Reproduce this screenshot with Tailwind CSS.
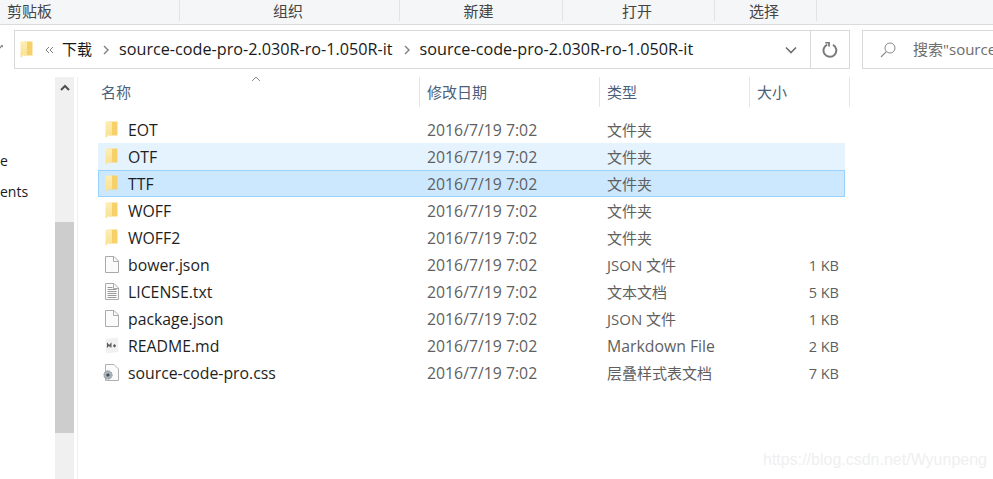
<!DOCTYPE html>
<html lang="en">
<head>
<meta charset="utf-8">
<title>source-code-pro-2.030R-ro-1.050R-it</title>
<script src="https://cdn.jsdelivr.net/npm/@tailwindcss/browser@4"></script>
</head>
<body class="relative w-[993px] h-[479px] overflow-hidden bg-white text-[15px] text-[#1a1a1a] font-['Open_Sans','Noto_Sans_CJK_SC',sans-serif]">

  <!-- ribbon group labels -->
  <div class="flex h-[25px] bg-[#f5f6f7] border-b border-[#dadbdc] text-[15px] text-[#444] leading-[23px]">
    <div class="w-[180px] h-[21px] pl-[7px] border-r border-[#e2e3e4]">剪贴板</div>
    <div class="w-[220px] h-[21px] text-center border-r border-[#e2e3e4] pr-[3px]">组织</div>
    <div class="w-[163px] h-[21px] text-center border-r border-[#e2e3e4] pr-[5px]">新建</div>
    <div class="w-[152px] h-[21px] text-center border-r border-[#e2e3e4] pr-[3px]">打开</div>
    <div class="w-[102px] h-[21px] text-center border-r border-[#e2e3e4] pr-[3px]">选择</div>
  </div>

  <!-- address row -->
  <div class="flex h-[39px] mt-[5px]">
    <svg class="w-[3px] h-[6px] mt-[14px]" viewBox="0 0 3 6"><path d="M-1 5 L2 1.5 L5 5" fill="none" stroke="#888" stroke-width="1.3"/></svg>
    <div class="ml-[11px] w-[836px] flex items-center border border-[#d9d9d9] text-[16.2px] text-[#1a1a1a]">
      <svg class="ml-[5px] w-[13px] h-[17px]" viewBox="0 0 13 17">
        <defs><linearGradient id="fa" x1="0" y1="0" x2="0" y2="1"><stop offset="0" stop-color="#fdeeb4"/><stop offset="1" stop-color="#fbe08e"/></linearGradient></defs>
        <path d="M4 0.5H12.5V14.5H4Z" fill="#f6d069"/>
        <path d="M0.5 0.5L7 0.5V14L2.5 14.5L2 16.5L0.5 16Z" fill="url(#fa)"/>
      </svg>
      <svg class="ml-[12px] w-[9px] h-[8px]" viewBox="0 0 9 8"><path d="M4 1L1 4L4 7M8 1L5 4L8 7" fill="none" stroke="#808080" stroke-width="1"/></svg>
      <span class="ml-[8px] text-[15px]">下载</span>
      <svg class="ml-[11px] w-[6px] h-[10px]" viewBox="0 0 6 10"><path d="M1 1L5 5L1 9" fill="none" stroke="#808080" stroke-width="1.4"/></svg>
      <span class="ml-[10px]">source-code-pro-2.030R-ro-1.050R-it</span>
      <svg class="ml-[11px] w-[6px] h-[10px]" viewBox="0 0 6 10"><path d="M1 1L5 5L1 9" fill="none" stroke="#808080" stroke-width="1.4"/></svg>
      <span class="ml-[10px]">source-code-pro-2.030R-ro-1.050R-it</span>
      <svg class="ml-auto mr-[13px] w-[12px] h-[8px]" viewBox="0 0 12 8"><path d="M1 1.5L6 6.5L11 1.5" fill="none" stroke="#707070" stroke-width="1.6"/></svg>
      <div class="w-[39px] h-full flex items-center justify-center border-l border-[#d9d9d9]">
        <svg class="w-[16px] h-[16px]" viewBox="0 0 16 16"><path d="M5.2 2.6A6.4 6.4 0 1 0 11 2.8" fill="none" stroke="#7a7a7a" stroke-width="2"/><path d="M3.2 0.5H7V4.4" fill="none" stroke="#7a7a7a" stroke-width="1.8"/></svg>
      </div>
    </div>
    <div class="ml-[12px] flex-1 flex items-center border border-[#d9d9d9] border-r-0 overflow-hidden whitespace-nowrap text-[#6d6d6d]">
      <svg class="ml-[17px] w-[16px] h-[16px] shrink-0" viewBox="0 0 16 16"><circle cx="10" cy="6" r="5" fill="none" stroke="#8a8a8a"/><path d="M6.3 9.7L1 15" stroke="#8a8a8a" stroke-width="1.2"/></svg>
      <span class="ml-[17px]">搜索"source</span>
    </div>
  </div>

  <!-- body -->
  <div class="flex mt-[8px] h-[402px]">
    <!-- nav pane, clipped on the left -->
    <div class="w-[55px] pt-[68px] text-[14px] leading-[31px]">
      <div>e</div>
      <div>ents</div>
    </div>

    <!-- scrollbar -->
    <div class="w-[19px] h-full flex flex-col bg-[#f0f0f0]">
      <div class="h-[20px] flex items-center justify-center">
        <svg class="w-[10px] h-[7px]" viewBox="0 0 10 7"><path d="M1 6L5 2L9 6" fill="none" stroke="#505050" stroke-width="2"/></svg>
      </div>
      <div class="mt-[125px] h-[211px] bg-[#cdcdcd]"></div>
    </div>
    <div class="ml-[3px] w-px h-full bg-[#f0f0f0]"></div>

    <!-- file list -->
    <div class="relative w-[772px] text-[15.8px]">
      <svg class="absolute left-[173px] top-[-1px] w-[10px] h-[6px]" viewBox="0 0 10 6"><path d="M1 5L5 1L9 5" fill="none" stroke="#909090"/></svg>
      <div class="flex h-[30px] text-[15px] text-[#4c607a] leading-[30px]">
        <div class="w-[342px] pl-[23px] border-r border-[#e5e5e5]">名称</div>
        <div class="w-[180px] pl-[7px] border-r border-[#e5e5e5]">修改日期</div>
        <div class="w-[150px] pl-[7px] border-r border-[#e5e5e5]">类型</div>
        <div class="w-[100px] pl-[7px] border-r border-[#e5e5e5]">大小</div>
      </div>

      <div class="mt-[9px] ml-[20px] w-[747px] text-[#1e1e1e]">
        <div class="flex items-center h-[27px] pt-[2px]">
          <svg class="ml-[7px] -mt-[2px] w-[13px] h-[17px]" viewBox="0 0 13 17"><path d="M4 0.5H12.5V14.5H4Z" fill="#f6d069"/><path d="M0.5 0.5L7 0.5V14L2.5 14.5L2 16.5L0.5 16Z" fill="url(#fa)"/></svg>
          <span class="ml-[10px] w-[299px]">EOT</span>
          <span class="w-[180px] text-[#5f5f5f]">2016/7/19 7:02</span>
          <span class="w-[150px] text-[15px] text-[#5f5f5f]">文件夹</span>
        </div>
        <div class="flex items-center h-[27px] pt-[2px] bg-[#e5f3ff]">
          <svg class="ml-[7px] -mt-[2px] w-[13px] h-[17px]" viewBox="0 0 13 17"><path d="M4 0.5H12.5V14.5H4Z" fill="#f6d069"/><path d="M0.5 0.5L7 0.5V14L2.5 14.5L2 16.5L0.5 16Z" fill="url(#fa)"/></svg>
          <span class="ml-[10px] w-[299px]">OTF</span>
          <span class="w-[180px] text-[#5f5f5f]">2016/7/19 7:02</span>
          <span class="w-[150px] text-[15px] text-[#5f5f5f]">文件夹</span>
        </div>
        <div class="flex items-center h-[27px] pt-[2px] bg-[#cce8ff] border border-[#99d1ff]">
          <svg class="ml-[6px] -mt-[2px] w-[13px] h-[17px]" viewBox="0 0 13 17"><path d="M4 0.5H12.5V14.5H4Z" fill="#f6d069"/><path d="M0.5 0.5L7 0.5V14L2.5 14.5L2 16.5L0.5 16Z" fill="url(#fa)"/></svg>
          <span class="ml-[10px] w-[299px]">TTF</span>
          <span class="w-[180px] text-[#5f5f5f]">2016/7/19 7:02</span>
          <span class="w-[150px] text-[15px] text-[#5f5f5f]">文件夹</span>
        </div>
        <div class="flex items-center h-[27px] pt-[2px]">
          <svg class="ml-[7px] -mt-[2px] w-[13px] h-[17px]" viewBox="0 0 13 17"><path d="M4 0.5H12.5V14.5H4Z" fill="#f6d069"/><path d="M0.5 0.5L7 0.5V14L2.5 14.5L2 16.5L0.5 16Z" fill="url(#fa)"/></svg>
          <span class="ml-[10px] w-[299px]">WOFF</span>
          <span class="w-[180px] text-[#5f5f5f]">2016/7/19 7:02</span>
          <span class="w-[150px] text-[15px] text-[#5f5f5f]">文件夹</span>
        </div>
        <div class="flex items-center h-[27px] pt-[2px]">
          <svg class="ml-[7px] -mt-[2px] w-[13px] h-[17px]" viewBox="0 0 13 17"><path d="M4 0.5H12.5V14.5H4Z" fill="#f6d069"/><path d="M0.5 0.5L7 0.5V14L2.5 14.5L2 16.5L0.5 16Z" fill="url(#fa)"/></svg>
          <span class="ml-[10px] w-[299px]">WOFF2</span>
          <span class="w-[180px] text-[#5f5f5f]">2016/7/19 7:02</span>
          <span class="w-[150px] text-[15px] text-[#5f5f5f]">文件夹</span>
        </div>
        <div class="flex items-center h-[27px] pt-[2px]">
          <svg class="ml-[7px] -mt-[2px] w-[14px] h-[17px]" viewBox="0 0 14 17"><path d="M0.5 0.5H9L13.5 5V16.5H0.5Z" fill="#fbfbfb" stroke="#aaa"/><path d="M8.5 0.5V5.5H13.5" fill="none" stroke="#aaa"/></svg>
          <span class="ml-[9px] w-[299px]">bower.json</span>
          <span class="w-[180px] text-[#5f5f5f]">2016/7/19 7:02</span>
          <span class="w-[150px] text-[15px] text-[#5f5f5f]">JSON 文件</span>
          <span class="w-[82px] text-right text-[14.5px] text-[#5f5f5f]">1 KB</span>
        </div>
        <div class="flex items-center h-[27px] pt-[2px]">
          <svg class="ml-[7px] -mt-[2px] w-[14px] h-[17px]" viewBox="0 0 14 17"><path d="M0.5 0.5H9L13.5 5V16.5H0.5Z" fill="#fbfbfb" stroke="#aaa"/><path d="M8.5 0.5V5.5H13.5" fill="none" stroke="#aaa"/><path d="M2.5 4.5H7.5M2.5 6.5H11.5M2.5 8.5H11.5M2.5 10.5H11.5M2.5 12.5H11.5M2.5 14.5H11.5" stroke="#9a9a9a"/></svg>
          <span class="ml-[9px] w-[299px]">LICENSE.txt</span>
          <span class="w-[180px] text-[#5f5f5f]">2016/7/19 7:02</span>
          <span class="w-[150px] text-[15px] text-[#5f5f5f]">文本文档</span>
          <span class="w-[82px] text-right text-[14.5px] text-[#5f5f5f]">5 KB</span>
        </div>
        <div class="flex items-center h-[27px] pt-[2px]">
          <svg class="ml-[7px] -mt-[2px] w-[14px] h-[17px]" viewBox="0 0 14 17"><path d="M0.5 0.5H9L13.5 5V16.5H0.5Z" fill="#fbfbfb" stroke="#aaa"/><path d="M8.5 0.5V5.5H13.5" fill="none" stroke="#aaa"/></svg>
          <span class="ml-[9px] w-[299px]">package.json</span>
          <span class="w-[180px] text-[#5f5f5f]">2016/7/19 7:02</span>
          <span class="w-[150px] text-[15px] text-[#5f5f5f]">JSON 文件</span>
          <span class="w-[82px] text-right text-[14.5px] text-[#5f5f5f]">1 KB</span>
        </div>
        <div class="flex items-center h-[27px] pt-[2px]">
          <svg class="ml-[7px] -mt-[2px] w-[14px] h-[17px]" viewBox="0 0 14 17"><path d="M0.5 2L13 0.5L13.5 15L1 16.5Z" fill="#f1f1f1"/><path d="M2.5 10.5V7L4.2 9L5.9 7V10.5M8 8.8H11M9.5 7.3V10.3" fill="none" stroke="#5a5a5a" stroke-width="1.2"/></svg>
          <span class="ml-[9px] w-[299px]">README.md</span>
          <span class="w-[180px] text-[#5f5f5f]">2016/7/19 7:02</span>
          <span class="w-[150px] text-[#5f5f5f]">Markdown File</span>
          <span class="w-[82px] text-right text-[14.5px] text-[#5f5f5f]">2 KB</span>
        </div>
        <div class="flex items-center h-[27px] pt-[2px]">
          <svg class="ml-[4px] -mt-[2px] w-[17px] h-[17px]" viewBox="0 0 17 17"><path d="M3.5 0.5H12L16.5 5V16.5H3.5Z" fill="#fbfbfb" stroke="#b0b0b0"/><circle cx="6" cy="11" r="4.2" fill="#a9b2b8" stroke="#8d979e" stroke-dasharray="1.5 1"/><circle cx="6" cy="11" r="1.6" fill="#3f4a52"/></svg>
          <span class="ml-[9px] w-[299px]">source-code-pro.css</span>
          <span class="w-[180px] text-[#5f5f5f]">2016/7/19 7:02</span>
          <span class="w-[150px] text-[15px] text-[#5f5f5f]">层叠样式表文档</span>
          <span class="w-[82px] text-right text-[14.5px] text-[#5f5f5f]">7 KB</span>
        </div>
      </div>
    </div>
  </div>

  <!-- watermark over the window -->
  <div class="absolute left-[763px] top-[451px] text-[16px] leading-[18px] text-[#efefef] font-['Liberation_Sans',sans-serif] whitespace-nowrap">https://blog.csdn.net/Wyunpeng</div>
</body>
</html>
